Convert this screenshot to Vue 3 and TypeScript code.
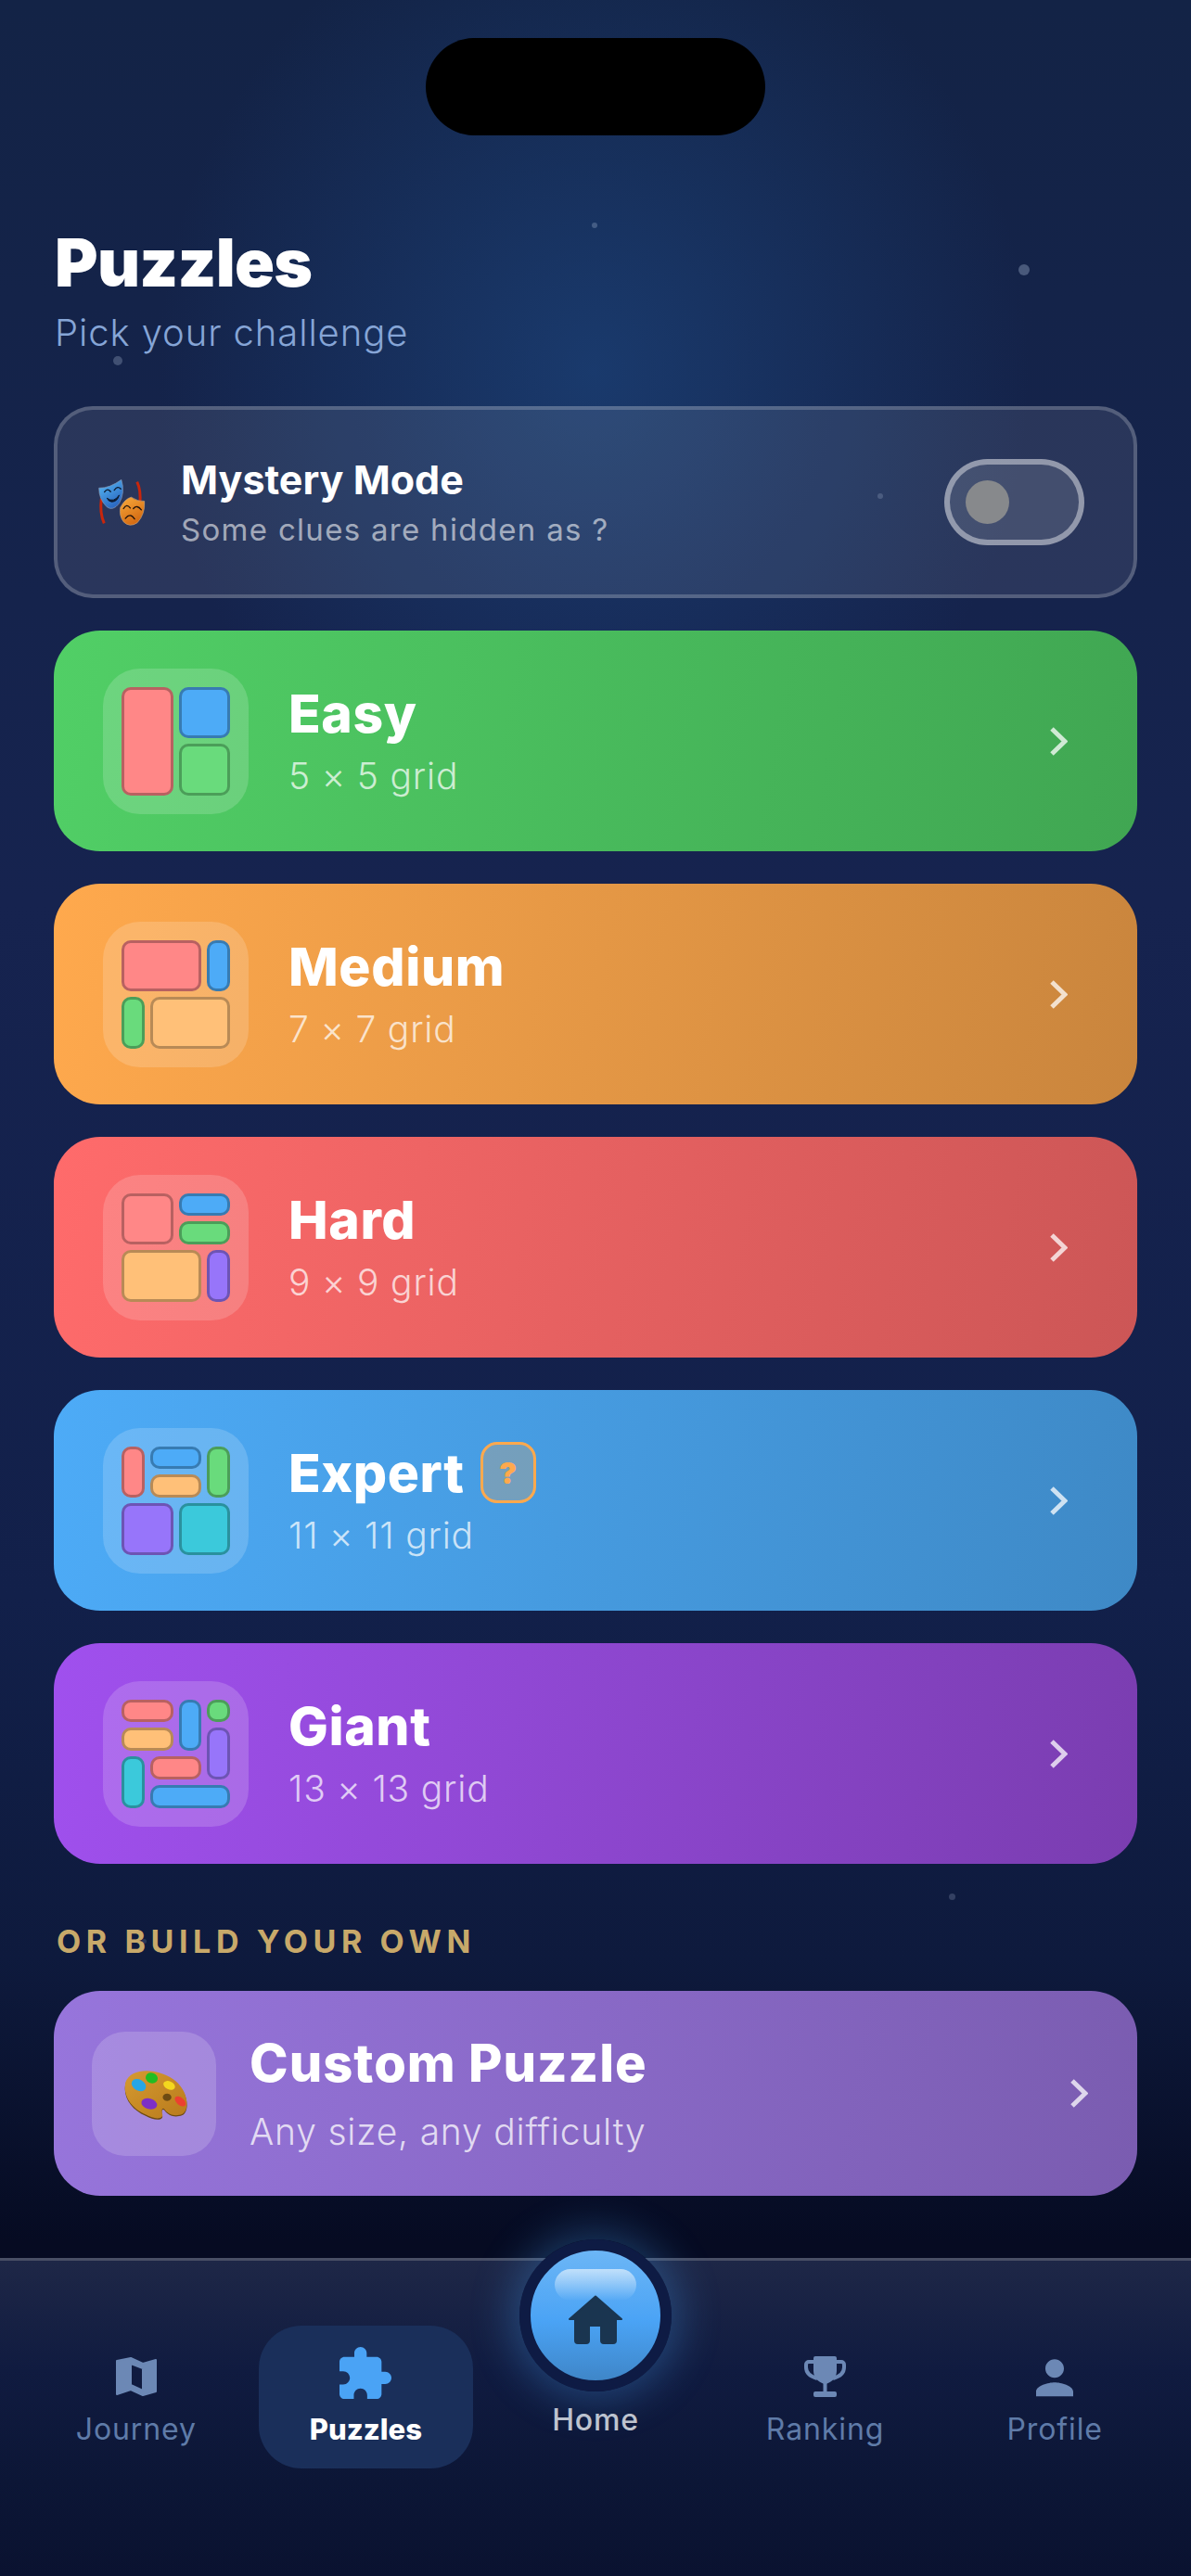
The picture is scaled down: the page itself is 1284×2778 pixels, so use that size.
<script setup lang="ts">
interface Cell { c: string; x: number; w: number; y: number; h: number }
interface Level { name: string; grid: string; tone: string; badge?: boolean; cells: Cell[] }

const dots = [
  { x: 1104, y: 291, s: 12, o: 0.3 },
  { x: 127, y: 389, s: 10, o: 0.25 },
  { x: 641, y: 243, s: 6, o: 0.25 },
  { x: 949, y: 535, s: 6, o: 0.2 },
  { x: 1026, y: 2045, s: 7, o: 0.2 },
  { x: 155, y: 2093, s: 5, o: 0.15 },
]

const levels: Level[] = [
  { name: 'Easy', grid: '5 × 5 grid', tone: 'easy', cells: [
    { c: 'red', x: 1, w: 2, y: 1, h: 4 }, { c: 'blue', x: 3, w: 2, y: 1, h: 2 }, { c: 'green', x: 3, w: 2, y: 3, h: 2 },
  ] },
  { name: 'Medium', grid: '7 × 7 grid', tone: 'medium', cells: [
    { c: 'red', x: 1, w: 3, y: 1, h: 2 }, { c: 'blue', x: 4, w: 1, y: 1, h: 2 }, { c: 'green', x: 1, w: 1, y: 3, h: 2 }, { c: 'orange', x: 2, w: 3, y: 3, h: 2 },
  ] },
  { name: 'Hard', grid: '9 × 9 grid', tone: 'hard', cells: [
    { c: 'red', x: 1, w: 2, y: 1, h: 2 }, { c: 'blue', x: 3, w: 2, y: 1, h: 1 }, { c: 'green', x: 3, w: 2, y: 2, h: 1 }, { c: 'orange', x: 1, w: 3, y: 3, h: 2 }, { c: 'purple', x: 4, w: 1, y: 3, h: 2 },
  ] },
  { name: 'Expert', grid: '11 × 11 grid', tone: 'expert', badge: true, cells: [
    { c: 'red', x: 1, w: 1, y: 1, h: 2 }, { c: 'blue', x: 2, w: 2, y: 1, h: 1 }, { c: 'orange', x: 2, w: 2, y: 2, h: 1 }, { c: 'green', x: 4, w: 1, y: 1, h: 2 }, { c: 'purple', x: 1, w: 2, y: 3, h: 2 }, { c: 'teal', x: 3, w: 2, y: 3, h: 2 },
  ] },
  { name: 'Giant', grid: '13 × 13 grid', tone: 'giant', cells: [
    { c: 'red', x: 1, w: 2, y: 1, h: 1 }, { c: 'blue', x: 3, w: 1, y: 1, h: 2 }, { c: 'green', x: 4, w: 1, y: 1, h: 1 }, { c: 'orange', x: 1, w: 2, y: 2, h: 1 }, { c: 'purple', x: 4, w: 1, y: 2, h: 2 }, { c: 'teal', x: 1, w: 1, y: 3, h: 2 }, { c: 'red', x: 2, w: 2, y: 3, h: 1 }, { c: 'blue', x: 2, w: 3, y: 4, h: 1 },
  ] },
]

function cellStyle(cell: Cell) {
  return {
    gridColumn: `${cell.x} / span ${cell.w}`,
    gridRow: `${cell.y} / span ${cell.h}`,
  }
}
function dotStyle(d: { x: number; y: number; s: number; o: number }) {
  return { left: `${d.x - d.s / 2}px`, top: `${d.y - d.s / 2}px`, width: `${d.s}px`, height: `${d.s}px`, opacity: d.o }
}
</script>

<template>
  <div class="screen">
    <i v-for="(d, i) in dots" :key="i" class="dot" :style="dotStyle(d)"></i>

    <main class="content">
      <div class="island"></div>

      <header class="head">
        <h1>Puzzles</h1>
        <p>Pick your challenge</p>
      </header>

      <section class="mystery">
        <svg class="masks" viewBox="75 85 160 155" aria-hidden="true">
          <defs>
            <linearGradient id="mb" x1="0" y1="0" x2="0.6" y2="1"><stop offset="0" stop-color="#58bdf7" /><stop offset="1" stop-color="#2a66c0" /></linearGradient>
            <linearGradient id="mo" x1="0" y1="0" x2="0.5" y2="1"><stop offset="0" stop-color="#f8ab3c" /><stop offset="1" stop-color="#d46a12" /></linearGradient>
          </defs>
          <path d="M88 150 C84 180 88 210 97 230" fill="none" stroke="#c8260c" stroke-width="9" />
          <path d="M204 95 C214 115 216 140 213 168" fill="none" stroke="#c8260c" stroke-width="9" />
          <path d="M80 115 Q115 116 153 88 Q166 130 146 165 Q125 192 105 176 Q80 152 80 115Z" fill="url(#mb)" stroke="#8a9ab5" stroke-width="2" />
          <path d="M98 128 Q108 114 118 127M130 122 Q141 106 151 118" fill="none" stroke="#0b1a30" stroke-width="4" stroke-linecap="round" />
          <path d="M106 148 Q128 165 146 138 Q140 160 122 160 Q112 160 106 148Z" fill="#0b1a30" stroke="#0b1a30" stroke-width="3" stroke-linejoin="round" />
          <path d="M150 178 Q165 150 185 145 Q208 160 228 158 Q231 200 205 228 Q180 245 160 225 Q145 205 150 178Z" fill="url(#mo)" stroke="#c9a27a" stroke-width="2" />
          <path d="M160 182 Q170 164 182 180M192 182 Q204 168 218 186" fill="none" stroke="#20120a" stroke-width="4" stroke-linecap="round" />
          <path d="M166 214 Q182 194 196 216" fill="none" stroke="#20120a" stroke-width="4" stroke-linecap="round" />
        </svg>
        <div class="mystery-text">
          <h2>Mystery Mode</h2>
          <p>Some clues are hidden as ?</p>
        </div>
        <div class="toggle"><span class="knob"></span></div>
      </section>

      <ul class="levels">
        <li v-for="lv in levels" :key="lv.name" class="card" :class="lv.tone">
          <div class="thumb">
            <div class="minigrid">
              <span v-for="(cell, i) in lv.cells" :key="i" class="cell" :class="cell.c" :style="cellStyle(cell)"></span>
            </div>
          </div>
          <div class="card-text">
            <h3>{{ lv.name }}<span v-if="lv.badge" class="badge">?</span></h3>
            <p>{{ lv.grid }}</p>
          </div>
          <svg class="chev" viewBox="0 0 19 31" aria-hidden="true"><polyline points="2,2 16,15.5 2,29" /></svg>
        </li>
      </ul>

      <h4 class="section">OR BUILD YOUR OWN</h4>

      <section class="card custom">
        <div class="thumb-custom">
          <svg class="palette" viewBox="95 145 220 175" aria-hidden="true">
            <defs>
              <linearGradient id="wood" x1="0" y1="0" x2="1" y2="1"><stop offset="0" stop-color="#d69a30" /><stop offset="1" stop-color="#b87a1c" /></linearGradient>
            </defs>
            <path d="M105 199 C120 154 200 149 260 189 C310 224 315 289 290 302 C265 312 245 304 232 287 C225 279 220 289 225 304 C228 319 200 322 170 304 C125 284 95 244 105 199Z" fill="#6e4a12" />
            <path fill-rule="evenodd" d="M105 195 C120 150 200 145 260 185 C310 220 315 285 290 298 C265 308 245 300 232 283 C225 275 220 285 225 300 C228 315 200 318 170 300 C125 280 95 240 105 195Z M240 232 a14 12 0 1 0 .1 0Z" fill="url(#wood)" />
            <ellipse cx="148" cy="204" rx="25" ry="18" transform="rotate(30 148 204)" fill="#27a6e6" />
            <ellipse cx="190" cy="181" rx="20" ry="17" transform="rotate(20 190 181)" fill="#20bd22" />
            <ellipse cx="247" cy="205" rx="20" ry="13" transform="rotate(25 247 205)" fill="#f4d81e" />
            <ellipse cx="182" cy="265" rx="26" ry="17" transform="rotate(15 182 265)" fill="#7d2fc6" />
            <ellipse cx="283" cy="257" rx="21" ry="12" transform="rotate(40 283 257)" fill="#ec4030" />
          </svg>
        </div>
        <div class="card-text custom-text">
          <h3>Custom Puzzle</h3>
          <p>Any size, any difficulty</p>
        </div>
        <svg class="chev" viewBox="0 0 19 31" aria-hidden="true"><polyline points="2,2 16,15.5 2,29" /></svg>
      </section>
    </main>

    <nav class="tabbar">
      <a class="tab">
        <span class="tab-icon">
          <svg width="44" height="42" viewBox="0 0 44 42"><path fill-rule="evenodd" stroke="currentColor" stroke-width="2" stroke-linejoin="round" d="M1 4 L16 1 L29 7 L43 3 V37 L29 41 L16 35 L1 40Z M16 7 V30 L29 36 V12Z" /></svg>
        </span>
        <span class="tab-label">Journey</span>
      </a>
      <a class="tab active">
        <span class="tab-icon">
          <svg width="64" height="64" viewBox="0.5 1 24 24"><path d="M20.5 11H19V7c0-1.1-.9-2-2-2h-4V3.5C13 2.12 11.88 1 10.5 1S8 2.12 8 3.5V5H4c-1.1 0-1.99.9-1.99 2v3.8H3.5c1.49 0 2.7 1.21 2.7 2.7s-1.21 2.7-2.7 2.7H2V20c0 1.1.9 2 2 2h3.8v-1.5c0-1.49 1.21-2.7 2.7-2.7 1.49 0 2.7 1.21 2.7 2.7V22H17c1.1 0 2-.9 2-2v-4h1.5c1.38 0 2.5-1.12 2.5-2.5S21.88 11 20.5 11z" /></svg>
        </span>
        <span class="tab-label">Puzzles</span>
      </a>
      <a class="tab home">
        <span class="home-btn">
          <span class="gloss"></span>
          <svg class="home-glyph" width="58" height="53" viewBox="0 0 58 53"><path d="M29 1.5 L57 26 H51 V49 a3 3 0 0 1-3 3 H38 a3 3 0 0 1-3-3 V33 H22 V49 a3 3 0 0 1-3 3 H10 a3 3 0 0 1-3-3 V26 H1Z" stroke="#1a3550" stroke-width="2" stroke-linejoin="round" fill="#1a3550" /></svg>
        </span>
        <span class="tab-icon"></span>
        <span class="tab-label">Home</span>
      </a>
      <a class="tab">
        <span class="tab-icon">
          <svg width="45" height="44" viewBox="0 0 45 44">
            <path d="M10 6 H5 a3 3 0 0 0-3 3 v3 c0 6 5 10 12 12 M35 6 H40 a3 3 0 0 1 3 3 v3 c0 6-5 10-12 12" fill="none" stroke="currentColor" stroke-width="4" />
            <path d="M12 0 H33 a2 2 0 0 1 2 2 V16 C35 24 28 29 22.500 30 C17 29 10 24 10 16 V2 a2 2 0 0 1 2-2Z" />
            <rect x="20.500" y="28" width="4" height="11" />
            <rect x="10" y="38" width="25" height="6" rx="2" />
          </svg>
        </span>
        <span class="tab-label">Ranking</span>
      </a>
      <a class="tab">
        <span class="tab-icon">
          <svg width="60" height="60" viewBox="0 -0.500 24 24"><path d="M12 12c2.210 0 4-1.790 4-4s-1.790-4-4-4-4 1.790-4 4 1.790 4 4 4zm0 2c-2.670 0-8 1.340-8 4v2h16v-2c0-2.660-5.330-4-8-4z" /></svg>
        </span>
        <span class="tab-label">Profile</span>
      </a>
    </nav>
  </div>
</template>

<style>
html, body { margin: 0; background: #0a1230; }
</style>

<style scoped>
.screen {
  position: relative;
  width: 1284px;
  height: 2778px;
  overflow: hidden;
  display: flex;
  flex-direction: column;
  font-family: Inter, "Noto Sans", sans-serif;
  color: #fff;
  background:
    radial-gradient(ellipse 470px 520px at 640px 400px, rgba(29, 72, 130, 0.62), rgba(29, 72, 130, 0) 100%),
    linear-gradient(180deg, #132346 0%, #16234f 35%, #12204a 62%, #0e1a3d 76%, #060b22 87%);
}
.dot { position: absolute; border-radius: 50%; background: #c8d6f0; }
.content { flex: 1; display: flex; flex-direction: column; padding: 41px 58px 0; position: relative; }
.island { width: 366px; height: 105px; border-radius: 53px; background: #000; align-self: center; }
.head { margin-top: 97px; padding-left: 1px; }
.head h1 { margin: 0; font-size: 71px; line-height: 80px; font-weight: 900; letter-spacing: -0.7px; }
.head p { margin: 12px 0 0; font-size: 40px; line-height: 48px; font-weight: 300; color: #86a5d6; letter-spacing: 0.9px; }

.mystery {
  box-sizing: border-box;
  margin-top: 55px;
  height: 207px;
  border: 4px solid rgba(255, 255, 255, 0.2);
  border-radius: 42px;
  background: rgba(255, 255, 255, 0.09);
  display: flex;
  align-items: center;
  padding: 0 53px 0 43px;
}
.masks { width: 53px; height: 52px; flex: none; }
.mystery-text { flex: 1; margin-left: 37px; }
.mystery-text h2 { margin: 0; font-size: 43px; line-height: 50px; font-weight: 700; letter-spacing: 0; }
.mystery-text p { margin: 9px 0 0; font-size: 33px; line-height: 40px; font-weight: 400; color: rgba(255, 255, 255, 0.58); letter-spacing: 1.3px; }
.toggle {
  box-sizing: border-box;
  width: 151px;
  height: 93px;
  border: 6px solid rgba(255, 255, 255, 0.42);
  border-radius: 47px;
  background: rgba(255, 255, 255, 0.12);
  display: flex;
  align-items: center;
  padding-left: 17px;
}
.knob { width: 47px; height: 47px; border-radius: 50%; background: #87898c; }

.levels { list-style: none; margin: 35px 0 0; padding: 0; display: flex; flex-direction: column; gap: 35px; }
.card {
  box-sizing: border-box;
  height: 238px;
  border-radius: 50px;
  display: flex;
  align-items: center;
  padding: 0 75px 0 53px;
}
.easy { background: linear-gradient(100deg, #51cf66, #40a652); }
.medium { background: linear-gradient(100deg, #ffa94d, #c9853d); }
.hard { background: linear-gradient(100deg, #ff6b6b, #cc5656); }
.expert { background: linear-gradient(100deg, #4dabf7, #3e89c6); }
.giant { background: linear-gradient(100deg, #a050ee, #7a3db0); }
.custom { height: 221px; margin-top: 0; padding: 0 53px 0 41px; background: linear-gradient(100deg, #9775dc, #7a5cb0); }

.thumb { width: 157px; height: 157px; flex: none; border-radius: 40px; background: rgba(255, 255, 255, 0.17); display: flex; align-items: center; justify-content: center; }
.minigrid { width: 117px; height: 117px; display: grid; grid-template-columns: repeat(4, 1fr); grid-template-rows: repeat(4, 1fr); gap: 6px; }
.cell { box-sizing: border-box; border: 3px solid rgba(0, 0, 0, 0.28); border-radius: 10px; min-width: 0; min-height: 0; }
.cell.red { background: #ff8787; }
.cell.blue { background: #4dabf7; }
.cell.green { background: #69db7c; }
.cell.orange { background: #ffc078; }
.cell.purple { background: #9775fa; }
.cell.teal { background: #3bc9db; }

.card-text { flex: 1; margin-left: 43px; }
.card-text h3 { margin: 0; display: flex; align-items: center; height: 64px; font-size: 57px; font-weight: 800; letter-spacing: 0.6px; }
.card-text p { margin: 12px 0 0; font-size: 39px; line-height: 48px; font-weight: 300; color: rgba(255, 255, 255, 0.72); letter-spacing: 0.8px; }
.badge {
  box-sizing: border-box;
  margin-left: 17px;
  width: 60px;
  height: 66px;
  border: 3px solid #ffa94d;
  border-radius: 18px;
  background: rgba(255, 169, 77, 0.25);
  color: #ffa94d;
  font-size: 32px;
  font-weight: 900;
  letter-spacing: 0;
  display: flex;
  align-items: center;
  justify-content: center;
}
.chev { width: 19px; height: 31px; flex: none; fill: none; stroke: rgba(255, 255, 255, 0.75); stroke-width: 5; }

.section { margin: 64px 0 33px 3px; font-size: 34px; line-height: 40px; font-weight: 700; letter-spacing: 5.6px; color: #c8a96a; }

.thumb-custom { width: 134px; height: 134px; flex: none; border-radius: 36px; background: rgba(255, 255, 255, 0.17); display: flex; align-items: center; justify-content: center; }
.palette { width: 73px; height: 58px; margin-left: 4px; }
.custom-text { margin-left: 36px; }
.custom-text h3 { font-size: 56px; letter-spacing: 1px; }
.custom-text p { font-size: 39px; margin-top: 18px; color: rgba(255, 255, 255, 0.75); letter-spacing: 0.8px; }

.tabbar {
  box-sizing: border-box;
  height: 343px;
  border-top: 3px solid rgba(255, 255, 255, 0.26);
  background: linear-gradient(180deg, #1e2747 0%, #101b40 35%, #0c1636 70%, #0a1230 100%);
  display: grid;
  grid-template-columns: repeat(5, 1fr);
  padding: 70px 23px 0;
  align-items: start;
}
.tab {
  position: relative;
  justify-self: center;
  box-sizing: border-box;
  width: 231px;
  height: 154px;
  border-radius: 46px;
  padding-top: 23px;
  display: flex;
  flex-direction: column;
  align-items: center;
  color: #6c88b5;
}
.tab-icon { height: 64px; display: flex; align-items: center; justify-content: center; fill: currentColor; }
.tab-label { margin-top: 5px; font-size: 32px; line-height: 40px; font-weight: 400; color: #5f7ba8; letter-spacing: 0.9px; }
.active { background: #1a2f5a; color: #4aa3f5; }
.active .tab-label { color: #fff; font-weight: 800; letter-spacing: 0; font-size: 31px; }
.home .tab-label { margin-top: -5px; color: rgba(255, 255, 255, 0.76); font-weight: 500; letter-spacing: 0.8px; }
.home-btn {
  position: absolute;
  top: -93px;
  left: 50%;
  margin-left: -82px;
  box-sizing: border-box;
  width: 164px;
  height: 164px;
  border-radius: 50%;
  border: 12px solid #0e1b44;
  background: linear-gradient(180deg, #6cb6f6 0%, #4aa3f5 55%, #3f86c8 100%);
  box-shadow: 0 0 44px 10px rgba(74, 163, 245, 0.3);
  display: flex;
  align-items: center;
  justify-content: center;
}
.gloss {
  position: absolute;
  top: 20px;
  left: 26px;
  width: 88px;
  height: 34px;
  border-radius: 18px;
  background: linear-gradient(180deg, rgba(255, 255, 255, 0.6), rgba(255, 255, 255, 0));
}
.home-glyph { position: relative; margin-top: 8px; }
</style>
